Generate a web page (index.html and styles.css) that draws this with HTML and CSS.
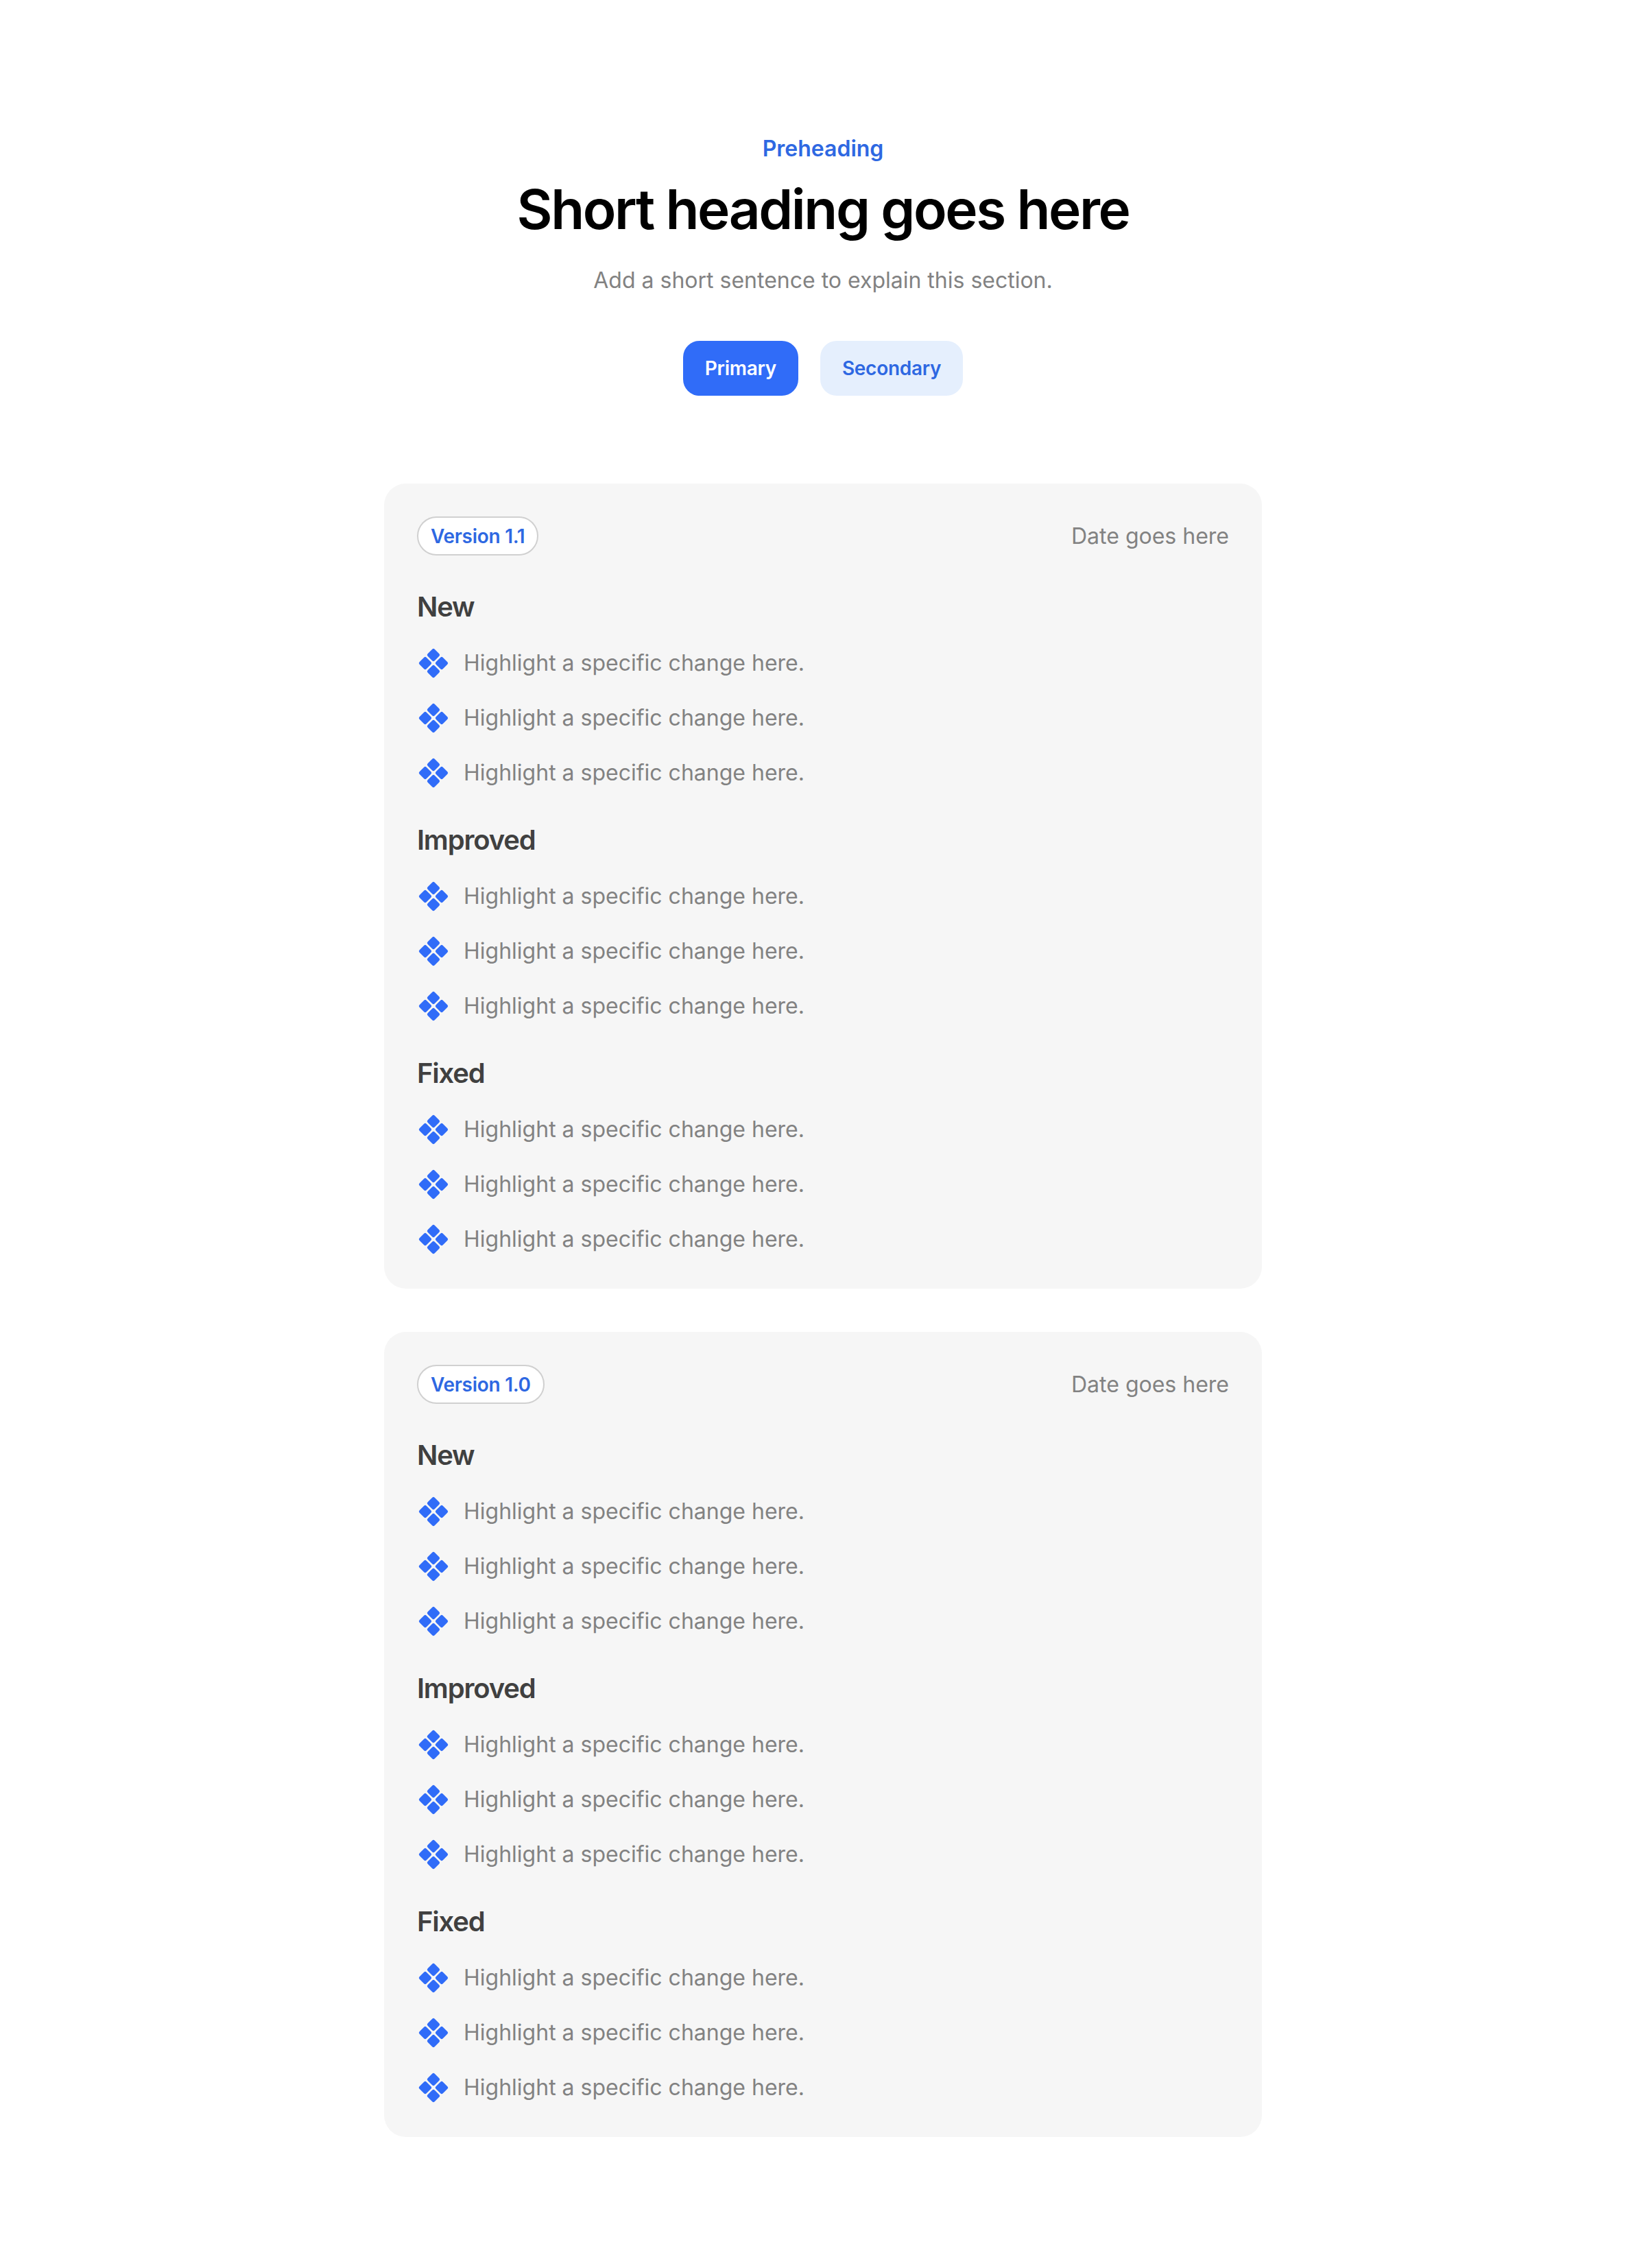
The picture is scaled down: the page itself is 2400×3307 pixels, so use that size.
FILE: index.html
```html
<!DOCTYPE html>
<html lang="en">
<head>
<meta charset="utf-8">
<title>Changelog</title>
<link rel="stylesheet" href="styles.css">
</head>
<body>
<svg class="defs" width="0" height="0" aria-hidden="true">
  <symbol id="dia" viewBox="0 0 24 24">
    <rect x="8.4" y="2.4" width="7.2" height="7.2" rx="1.3" transform="rotate(45 12 6)"/>
    <rect x="2.4" y="8.4" width="7.2" height="7.2" rx="1.3" transform="rotate(45 6 12)"/>
    <rect x="14.4" y="8.4" width="7.2" height="7.2" rx="1.3" transform="rotate(45 18 12)"/>
    <rect x="8.4" y="14.4" width="7.2" height="7.2" rx="1.3" transform="rotate(45 12 18)"/>
  </symbol>
</svg>
<main class="page">
  <header class="hero">
    <p class="pre">Preheading</p>
    <h1 class="title">Short heading goes here</h1>
    <p class="sub">Add a short sentence to explain this section.</p>
    <div class="actions">
      <a class="btn btn-primary">Primary</a>
      <a class="btn btn-secondary">Secondary</a>
    </div>
  </header>
  <div class="cards">
    <article class="card">
      <div class="card-head"><span class="pill">Version 1.1</span><span class="date">Date goes here</span></div>
      <section class="group">
        <h2 class="group-title">New</h2>
        <ul class="list">
          <li class="item"><svg class="ico"><use href="#dia"/></svg>Highlight a specific change here.</li>
          <li class="item"><svg class="ico"><use href="#dia"/></svg>Highlight a specific change here.</li>
          <li class="item"><svg class="ico"><use href="#dia"/></svg>Highlight a specific change here.</li>
        </ul>
      </section>
      <section class="group">
        <h2 class="group-title">Improved</h2>
        <ul class="list">
          <li class="item"><svg class="ico"><use href="#dia"/></svg>Highlight a specific change here.</li>
          <li class="item"><svg class="ico"><use href="#dia"/></svg>Highlight a specific change here.</li>
          <li class="item"><svg class="ico"><use href="#dia"/></svg>Highlight a specific change here.</li>
        </ul>
      </section>
      <section class="group">
        <h2 class="group-title">Fixed</h2>
        <ul class="list">
          <li class="item"><svg class="ico"><use href="#dia"/></svg>Highlight a specific change here.</li>
          <li class="item"><svg class="ico"><use href="#dia"/></svg>Highlight a specific change here.</li>
          <li class="item"><svg class="ico"><use href="#dia"/></svg>Highlight a specific change here.</li>
        </ul>
      </section>
    </article>
    <article class="card">
      <div class="card-head"><span class="pill">Version 1.0</span><span class="date">Date goes here</span></div>
      <section class="group">
        <h2 class="group-title">New</h2>
        <ul class="list">
          <li class="item"><svg class="ico"><use href="#dia"/></svg>Highlight a specific change here.</li>
          <li class="item"><svg class="ico"><use href="#dia"/></svg>Highlight a specific change here.</li>
          <li class="item"><svg class="ico"><use href="#dia"/></svg>Highlight a specific change here.</li>
        </ul>
      </section>
      <section class="group">
        <h2 class="group-title">Improved</h2>
        <ul class="list">
          <li class="item"><svg class="ico"><use href="#dia"/></svg>Highlight a specific change here.</li>
          <li class="item"><svg class="ico"><use href="#dia"/></svg>Highlight a specific change here.</li>
          <li class="item"><svg class="ico"><use href="#dia"/></svg>Highlight a specific change here.</li>
        </ul>
      </section>
      <section class="group">
        <h2 class="group-title">Fixed</h2>
        <ul class="list">
          <li class="item"><svg class="ico"><use href="#dia"/></svg>Highlight a specific change here.</li>
          <li class="item"><svg class="ico"><use href="#dia"/></svg>Highlight a specific change here.</li>
          <li class="item"><svg class="ico"><use href="#dia"/></svg>Highlight a specific change here.</li>
        </ul>
      </section>
    </article>
  </div>
</main>
</body>
</html>
```
FILE: styles.css
```css
* { box-sizing: border-box; }
html, body { margin: 0; background: #fff; }
body { font-family: Inter, "Liberation Sans", sans-serif; color: #828282; }
.defs { position: absolute; }
.page { width: 1280px; margin: 0 auto; padding: 193px 0 191px; }
.hero { display: flex; flex-direction: column; align-items: center; margin-bottom: 128px; }
.pre { margin: 0 0 16px; font-size: 32px; line-height: 48px; font-weight: 600; color: #2e68e2; }
.title { margin: 0 0 32px; font-size: 80px; line-height: 96px; font-weight: 600; letter-spacing: -2.4px; color: #000; }
.sub { margin: 0 0 64px; font-size: 32px; line-height: 48px; color: #828282; }
.actions { display: flex; gap: 32px; }
.btn { display: flex; align-items: center; height: 80px; padding: 0 32px; border-radius: 24px; font-size: 28px; font-weight: 600; letter-spacing: -0.28px; }
.btn-primary { background: #306cf8; color: #fff; }
.btn-secondary { background: #e5effd; color: #2e68e2; }
.cards { display: flex; flex-direction: column; gap: 63px; }
.card { background: #f6f6f6; border-radius: 32px; padding: 48px; display: flex; flex-direction: column; gap: 46px; }
.card-head { display: flex; justify-content: space-between; align-items: center; margin-bottom: 1px; }
.pill { height: 57px; display: flex; align-items: center; padding: 0 18px; background: #fff; border: 2px solid #d0d0d0; border-radius: 29px; font-size: 28px; font-weight: 600; letter-spacing: -0.28px; color: #2e68e2; }
.date { font-size: 32px; line-height: 48px; }
.group { display: flex; flex-direction: column; gap: 30px; }
.group-title { margin: 0; font-size: 40px; line-height: 56px; font-weight: 600; letter-spacing: -1.2px; color: #404040; }
.list { list-style: none; margin: 0; padding: 0; display: flex; flex-direction: column; gap: 32px; }
.item { display: flex; align-items: center; gap: 20px; font-size: 32px; line-height: 48px; }
.ico { width: 48px; height: 48px; flex: none; fill: #306cf8; }
```
